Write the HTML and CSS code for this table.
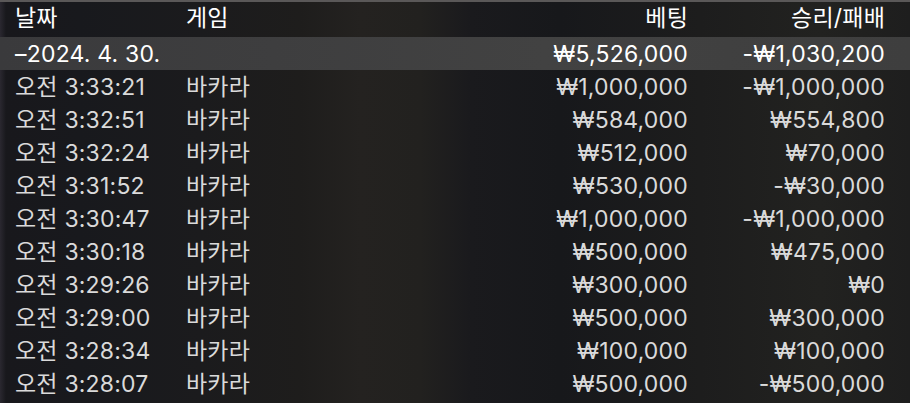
FILE: index.html
```html
<!DOCTYPE html>
<html lang="ko">
<head>
	<meta charset="UTF-8">
	<title>베팅 내역</title>
	<link rel="stylesheet" href="styles.css">
</head>
<body>
	<div class="panel">
		<div class="row head">
			<span>날짜</span>
			<span>게임</span>
			<span class="num">베팅</span>
			<span class="num">승리/패배</span>
		</div>
		<div class="row day">
			<span>–2024. 4. 30.</span>
			<span></span>
			<span class="num">₩5,526,000</span>
			<span class="num">-₩1,030,200</span>
		</div>
		<div class="row"><span>오전 3:33:21</span><span>바카라</span><span class="num">₩1,000,000</span><span class="num">-₩1,000,000</span></div>
		<div class="row"><span>오전 3:32:51</span><span>바카라</span><span class="num">₩584,000</span><span class="num">₩554,800</span></div>
		<div class="row"><span>오전 3:32:24</span><span>바카라</span><span class="num">₩512,000</span><span class="num">₩70,000</span></div>
		<div class="row"><span>오전 3:31:52</span><span>바카라</span><span class="num">₩530,000</span><span class="num">-₩30,000</span></div>
		<div class="row"><span>오전 3:30:47</span><span>바카라</span><span class="num">₩1,000,000</span><span class="num">-₩1,000,000</span></div>
		<div class="row"><span>오전 3:30:18</span><span>바카라</span><span class="num">₩500,000</span><span class="num">₩475,000</span></div>
		<div class="row"><span>오전 3:29:26</span><span>바카라</span><span class="num">₩300,000</span><span class="num">₩0</span></div>
		<div class="row"><span>오전 3:29:00</span><span>바카라</span><span class="num">₩500,000</span><span class="num">₩300,000</span></div>
		<div class="row"><span>오전 3:28:34</span><span>바카라</span><span class="num">₩100,000</span><span class="num">₩100,000</span></div>
		<div class="row"><span>오전 3:28:07</span><span>바카라</span><span class="num">₩500,000</span><span class="num">-₩500,000</span></div>
	</div>
</body>
</html>
```

FILE: styles.css
```css
*{
	margin: 0;
	padding: 0;
}
html,body{
	height: 100%;
	overflow: hidden;
}
body{
	background: #1b1b1d;
	font-family: Inter, "Noto Sans CJK KR", sans-serif;
	font-size: 23px;
	letter-spacing: 0.2px;
	color: #dadada;
}
.panel{
	height: 100%;
	border-top: 2px solid #5a5858;
	background:
		linear-gradient(90deg, #2a2830 0, #18181c 6px, #18191d 80px, #1b1b1d 200px, #1e1d1c 300px, #242220 360px, #22211f 420px, #1a1a1d 470px, #17181b 560px, #1d1d1d 700px, #222220 820px, #1e1e1e 910px);
}
.row{
	display: grid;
	grid-template-columns: 171px 150px 1fr 197px;
	height: 33px;
	line-height: 34px;
	padding: 0 25px 0 15px;
	white-space: nowrap;
}
.head{
	height: 35px;
	line-height: 33px;
	color: #fff;
}
.day{
	color: #fff;
	background: linear-gradient(90deg, #3a3a3c, #424242 60%, #3e3e3e);
}
.num{
	text-align: right;
}
```
